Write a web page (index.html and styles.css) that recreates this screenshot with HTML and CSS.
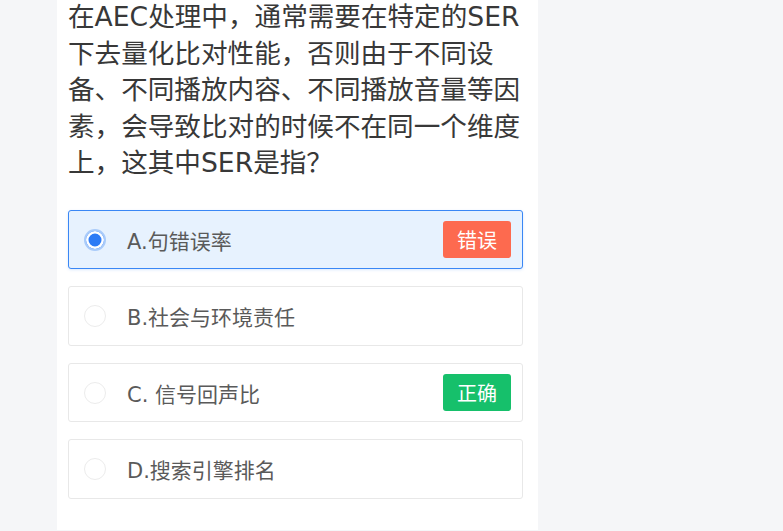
FILE: index.html
```html
<!DOCTYPE html>
<html lang="zh-CN">
<head>
<meta charset="utf-8">
<title>题目</title>
<link rel="stylesheet" href="styles.css">
</head>
<body>
<main class="card">
  <p class="question">在AEC处理中，通常需要在特定的SER下去量化比对性能，否则由于不同设备、不同播放内容、不同播放音量等因素，会导致比对的时候不在同一个维度上，这其中SER是指？</p>
  <ul class="options">
    <li class="option selected">
      <span class="radio"></span>
      <span class="label">A.句错误率</span>
      <span class="badge wrong">错误</span>
    </li>
    <li class="option">
      <span class="radio"></span>
      <span class="label">B.社会与环境责任</span>
    </li>
    <li class="option">
      <span class="radio"></span>
      <span class="label">C. 信号回声比</span>
      <span class="badge right">正确</span>
    </li>
    <li class="option">
      <span class="radio"></span>
      <span class="label">D.搜索引擎排名</span>
    </li>
  </ul>
</main>
</body>
</html>
```

FILE: styles.css
```css
* { box-sizing: border-box; }
html, body {
  margin: 0;
  padding: 0;
  height: 100%;
  overflow: hidden;
}
body {
  background: #f5f6f8;
  font-family: "DejaVu Sans", "Noto Sans CJK SC", "Noto Sans", sans-serif;
}
.card {
  margin-left: 57px;
  width: 481px;
  min-height: 100%;
  background: #ffffff;
  padding: 0 15px 0 11px;
}
.question {
  margin: -1px -2px 0 0;
  font-size: 26.6px;
  line-height: 36.6px;
  color: #383838;
}
.options {
  list-style: none;
  margin: 28px 0 0 0;
  padding: 0;
  display: flex;
  flex-direction: column;
  gap: 17.3px;
}
.option {
  height: 59.2px;
  border: 1px solid #e8e8e8;
  border-radius: 3px;
  background: #ffffff;
  display: flex;
  align-items: center;
  padding: 0 11px 0 15px;
}
.option.selected {
  background: #e7f2fe;
  border-color: #3a87f5;
  box-shadow: 0 1px 3px rgba(58, 135, 245, 0.18);
}
.radio {
  width: 22px;
  height: 22px;
  border-radius: 50%;
  border: 1.5px solid #ececec;
  background: #ffffff;
  flex: none;
}
.selected .radio {
  border: 2px solid #a9cbfa;
  background: #2d7bf5;
  box-shadow: inset 0 0 0 2.5px #ffffff;
}
.label {
  margin-left: 21px;
  font-size: 21px;
  color: #5a5a5a;
  flex: 1;
}
.badge {
  width: 68px;
  height: 37px;
  border-radius: 3px;
  color: #ffffff;
  font-size: 20px;
  display: flex;
  align-items: center;
  justify-content: center;
  flex: none;
}
.badge.wrong { background: #fd6a4f; }
.badge.right { background: #16c06b; }
```
